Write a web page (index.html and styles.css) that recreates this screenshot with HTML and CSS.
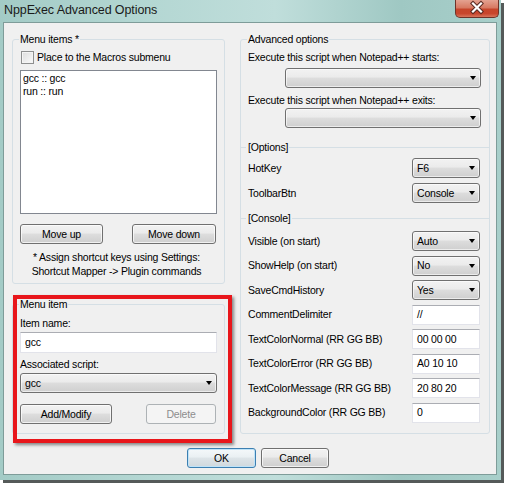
FILE: index.html
```html
<!DOCTYPE html>
<html>
<head>
<meta charset="utf-8">
<link rel="stylesheet" href="styles.css">
</head>
<body>
<div class="window">
  <div class="titlebar">
    <span class="title">NppExec Advanced Options</span>
    <div class="close">
      <svg width="44" height="18" viewBox="0 0 44 18">
        <path d="M18 4.5 L26 12.5 M26 4.5 L18 12.5" stroke="#5a2a22" stroke-width="4.2" stroke-linecap="square" fill="none"/>
        <path d="M18 4.5 L26 12.5 M26 4.5 L18 12.5" stroke="#ffffff" stroke-width="2.2" stroke-linecap="square" fill="none"/>
      </svg>
    </div>
  </div>
  <div class="client">
    <div class="columns">
      <div class="col-left">
        <fieldset class="group g-items">
          <legend>Menu items *</legend>
          <div class="check"><span class="box"></span><span>Place to the Macros submenu</span></div>
          <div class="listbox">
            <div>gcc :: gcc</div>
            <div>run :: run</div>
          </div>
          <div class="btnrow move">
            <div class="btn w-up">Move up</div>
            <div class="btn w-down">Move down</div>
          </div>
          <p class="note">* Assign shortcut keys using Settings:<br>Shortcut Mapper -&gt; Plugin commands</p>
        </fieldset>
        <fieldset class="group g-item">
          <legend>Menu item</legend>
          <div class="lbl l-name">Item name:</div>
          <div class="edit e-name">gcc</div>
          <div class="lbl l-script">Associated script:</div>
          <div class="combo c-script"><span class="val">gcc</span></div>
          <div class="btnrow edit-btns">
            <div class="btn w-add">Add/Modify</div>
            <div class="btn disabled w-del">Delete</div>
          </div>
        </fieldset>
        <div class="highlight"></div>
      </div>
      <div class="col-right">
        <fieldset class="group g-adv">
          <legend>Advanced options</legend>
          <div class="lbl l-start">Execute this script when Notepad++ starts:</div>
          <div class="combo c-long c-start"><span class="val"></span></div>
          <div class="lbl l-exit">Execute this script when Notepad++ exits:</div>
          <div class="combo c-long c-exit"><span class="val"></span></div>

          <div class="sep s-options"><span>[Options]</span></div>
          <div class="rows opt-rows">
            <div class="row"><span>HotKey</span><div class="combo c-small"><span class="val">F6</span></div></div>
            <div class="row"><span>ToolbarBtn</span><div class="combo c-small"><span class="val">Console</span></div></div>
          </div>

          <div class="sep s-console"><span>[Console]</span></div>
          <div class="rows con-rows">
            <div class="row"><span>Visible (on start)</span><div class="combo c-small"><span class="val">Auto</span></div></div>
            <div class="row"><span>ShowHelp (on start)</span><div class="combo c-small"><span class="val">No</span></div></div>
            <div class="row"><span>SaveCmdHistory</span><div class="combo c-small"><span class="val">Yes</span></div></div>
            <div class="row"><span>CommentDelimiter</span><div class="edit e-small">//</div></div>
            <div class="row"><span>TextColorNormal (RR GG BB)</span><div class="edit e-small">00 00 00</div></div>
            <div class="row"><span>TextColorError (RR GG BB)</span><div class="edit e-small">A0 10 10</div></div>
            <div class="row"><span>TextColorMessage (RR GG BB)</span><div class="edit e-small">20 80 20</div></div>
            <div class="row"><span>BackgroundColor (RR GG BB)</span><div class="edit e-small">0</div></div>
          </div>
        </fieldset>
      </div>
    </div>
    <div class="footer">
      <div class="btn default w-ok">OK</div>
      <div class="btn w-cancel">Cancel</div>
    </div>
  </div>
</div>
</body>
</html>
```

FILE: styles.css
```css
* { box-sizing: border-box; }
html, body { margin: 0; padding: 0; }
body {
  background: #ffffff;
  width: 505px;
  height: 484px;
  overflow: hidden;
  font-family: "Liberation Sans", Arial, sans-serif;
  font-size: 10.5px;
  letter-spacing: -0.2px;
  color: #000;
}

.window {
  width: 501px;
  height: 480px;
  padding: 0 4px 5px 3px;
  background: linear-gradient(90deg, #a3cbc6 0%, #b4d7d3 30%, #c0dedb 55%, #9fc8c3 80%, #a8cfca 100%);
  box-shadow: 3px 3px 0 #555a59;
  display: flex;
  flex-direction: column;
}

.titlebar {
  height: 22px;
  display: flex;
  align-items: flex-start;
}
.title {
  font-size: 12.5px;
  letter-spacing: -0.1px;
  line-height: 20px;
  padding-left: 1px;
  color: #1a1a1a;
}
.close {
  margin-left: auto;
  margin-right: -2px;
  width: 44px;
  height: 18px;
  border: 1px solid #6e3329;
  border-top: none;
  border-radius: 0 0 5px 5px;
  background: linear-gradient(#e4a291 0%, #d77a63 45%, #c6452b 55%, #c8462d 80%, #d8755c 100%);
  overflow: hidden;
}
.close svg { display: block; margin: -1px 0 0 -1px; }

.client {
  flex: 1;
  background: #f0f0f0;
  border: 1px solid #7e9c99;
  padding: 10px 0 0 0;
}

.columns {
  display: flex;
  gap: 15px;
  margin-left: 8px;
}
.col-left {
  position: relative;
  width: 213px;
  display: flex;
  flex-direction: column;
}
.col-right { width: 250px; }

.group {
  margin: 0;
  border: 1px solid #d5dfe5;
  border-radius: 3px;
  padding: 0 7px 0 7px;
  min-width: 0;
}
.group legend {
  padding: 0 1px;
  margin-left: -1px;
  line-height: 13px;
}
.g-items { height: 251px; }
.g-item { height: 136px; margin-top: 14px; }
.g-adv { height: 401px; padding-right: 8px; }

.check {
  display: flex;
  align-items: center;
  height: 13px;
  margin-top: 5px;
  margin-left: 1px;
  line-height: 13px;
}
.check .box {
  width: 13px;
  height: 13px;
  border: 1px solid #8e8f8f;
  background: linear-gradient(135deg, #dcdcdc, #fbfbfb);
  box-shadow: inset 0 0 0 1px #f4f4f4;
  margin-right: 3px;
  flex: none;
}

.listbox {
  margin-top: 6px;
  height: 144px;
  background: #fff;
  border: 1px solid #828790;
  padding: 1px 2px;
  line-height: 13px;
}

.btnrow { display: flex; justify-content: space-between; }
.move { margin-top: 10px; }
.edit-btns { margin-top: 11px; }

.btn {
  height: 20px;
  border: 1px solid #707070;
  border-radius: 3px;
  background: linear-gradient(#f2f2f2 0%, #ebebeb 45%, #dddddd 50%, #cfcfcf 100%);
  box-shadow: inset 0 0 0 1px rgba(255,255,255,0.7);
  display: flex;
  align-items: center;
  justify-content: center;
  line-height: 13px;
}
.w-up { width: 83px; }
.w-down { width: 84px; margin-right: 1px; }
.w-add { width: 92px; }
.w-del { width: 70px; margin-right: 1px; }
.btn.disabled {
  border-color: #adb2b5;
  background: #f4f4f4;
  box-shadow: none;
  color: #8d8d8d;
}
.btn.default {
  border-color: #3c7fb1;
  box-shadow: inset 0 0 0 1px #bfe3f8;
  background: linear-gradient(#f4f8fa 0%, #eaf0f3 45%, #dde4e8 50%, #d0d8dd 100%);
}

.note {
  margin: 6px 0 0 0;
  text-align: center;
  line-height: 14px;
  padding-right: 4px;
}

.lbl { line-height: 13px; }
.l-name { margin-top: 6px; }
.e-name { margin-top: 2px; height: 21px; }
.l-script { margin-top: 5px; }
.c-script { margin-top: 2px; }

.edit {
  background: #fff;
  border: 1px solid #e2e3ea;
  border-top-color: #abadb3;
  padding-left: 4px;
  display: flex;
  align-items: center;
  line-height: 13px;
}

.combo {
  height: 20px;
  border: 1px solid #707070;
  border-radius: 3px;
  background: linear-gradient(#f2f2f2 0%, #ebebeb 45%, #dddddd 50%, #cfcfcf 100%);
  box-shadow: inset 0 0 0 1px rgba(255,255,255,0.6);
  display: flex;
  align-items: center;
  padding-left: 4px;
  line-height: 13px;
}
.combo .val { flex: 1; }
.combo::after {
  content: "";
  flex: none;
  width: 0;
  height: 0;
  border-top: 4px solid #000;
  border-left: 3.5px solid transparent;
  border-right: 3.5px solid transparent;
  margin-right: 4px;
}

.l-start { margin-top: 5px; }
.c-long { width: 196px; margin-left: 37px; }
.c-start { margin-top: 4px; }
.l-exit { margin-top: 6px; }
.c-exit { margin-top: 1px; }

.sep {
  display: flex;
  align-items: center;
  margin-left: -8px;
  margin-right: -9px;
  line-height: 13px;
}
.sep::before {
  content: "";
  width: 6px;
  height: 1px;
  background: #d5dfe5;
}
.sep::after {
  content: "";
  flex: 1;
  height: 1px;
  background: #d5dfe5;
}
.sep span { padding: 0 1px 0 2px; }
.s-options { margin-top: 13px; }
.s-console { margin-top: 9px; }

.rows { display: flex; flex-direction: column; }
.opt-rows { margin-top: 4px; gap: 5px; }
.con-rows { margin-top: 6px; gap: 4.5px; }
.row {
  height: 20px;
  display: flex;
  align-items: center;
  justify-content: space-between;
  line-height: 13px;
}
.c-small { width: 68px; margin-right: 1px; }
.e-small { width: 68px; height: 20px; margin-right: 1px; }

.highlight {
  position: absolute;
  left: 1px;
  top: 262px;
  width: 219px;
  height: 148px;
  border: 4px solid #e8161b;
  box-shadow: 2px 2px 3px rgba(0,0,0,0.45);
  pointer-events: none;
}

.footer {
  display: flex;
  gap: 5px;
  margin-top: 14px;
  margin-left: 183px;
}
.w-ok { width: 69px; }
.w-cancel { width: 68px; }
```
